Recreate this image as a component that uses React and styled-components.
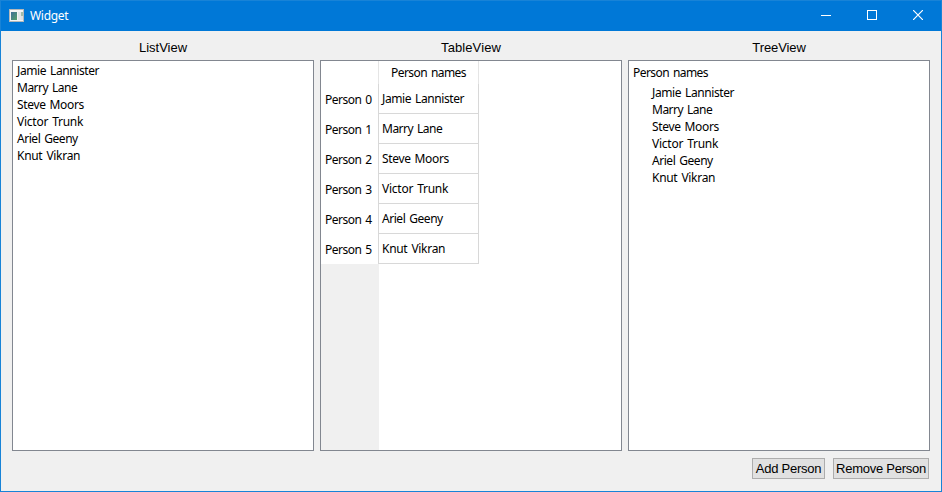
import React from "react";
import styled, { createGlobalStyle } from "styled-components";

const people = [
  { name: "Jamie Lannister", spacing: -0.4 },
  { name: "Marry Lane", spacing: -0.5 },
  { name: "Steve Moors", spacing: -0.35 },
  { name: "Victor Trunk", spacing: -0.25 },
  { name: "Ariel Geeny", spacing: -0.45 },
  { name: "Knut Vikran", spacing: -0.3 },
];

const GlobalStyle = createGlobalStyle`
  * { box-sizing: border-box; }
  body { margin: 0; overflow: hidden; }
`;

const Window = styled.div`
  width: 942px;
  height: 492px;
  display: flex;
  flex-direction: column;
  background: #f0f0f0;
  border: 1px solid #1883d7;
  color: #000;
  font: 12px/17px "Noto Sans", "Open Sans", sans-serif;
  white-space: nowrap;
`;

const TitleBar = styled.header`
  height: 30px;
  flex: none;
  display: flex;
  align-items: center;
  background: #0078d7;
  color: #fff;
  padding-left: 8px;
`;

const Title = styled.span`
  flex: 1;
  margin: -1px 0 0 5px;
  letter-spacing: ${(p) => p.$spacing}px;
`;

const Caption = styled.span`
  width: 46px;
  height: 30px;
  padding-bottom: 2px;
  display: flex;
  align-items: center;
  justify-content: center;
`;

const Views = styled.main`
  display: flex;
  gap: 6px;
  padding: 6px 11px 0;
`;

const Column = styled.section`
  width: 302px;
`;

const Heading = styled.h2`
  margin: 0;
  height: 23px;
  font: 13px/22px "Liberation Sans", Arial, sans-serif;
  text-align: center;
  letter-spacing: ${(p) => p.$spacing}px;
`;

const Panel = styled.div`
  height: 391px;
  background: #fff;
  border: 1px solid #828790;
`;

const List = styled.ul`
  margin: 0;
  list-style: none;
  padding: ${(p) => (p.$tree ? "0 0 0 23px" : "1px 0 0 4px")};
`;

const Label = styled.span`
  display: block;
  letter-spacing: ${(p) => p.$spacing}px;
  word-spacing: 1.2px;
`;

const TreeHeader = styled.div`
  height: 23px;
  padding: 3px 0 0 4px;
`;

const Table = styled.div`
  height: 100%;
  display: grid;
  grid-template-columns: 58px 100px;
  grid-template-rows: 23px repeat(6, 30px) 1fr;
`;

const Corner = styled.div`
  border-right: 1px solid #e5e5e5;
`;

const ColumnHead = styled.div`
  border-right: 1px solid #e5e5e5;
  padding: 3px 0 0 12px;
`;

const RowHead = styled.div`
  border-right: 1px solid #d8d8d8;
  padding: 7px 0 0 4px;
`;

const Cell = styled.div`
  border-right: 1px solid #d8d8d8;
  border-bottom: 1px solid #d8d8d8;
  padding: 6px 0 0 3px;
`;

const HeaderFill = styled.div`
  background: #f0f0f0;
`;

const Actions = styled.footer`
  display: flex;
  justify-content: flex-end;
  gap: 8px;
  padding: 7px 12px 0 0;
`;

const Button = styled.button`
  width: ${(p) => p.$width}px;
  height: 21px;
  padding: 0;
  border: 1px solid #adadad;
  background: #e1e1e1;
  color: #000;
  font: 13px/19px "Liberation Sans", Arial, sans-serif;
  letter-spacing: ${(p) => p.$spacing}px;
`;

function AppIcon() {
  return (
    <svg width="16" height="14" viewBox="0 0 16 14" shapeRendering="crispEdges">
      <defs>
        <linearGradient id="screen" x1="0" y1="0" x2="1" y2="1">
          <stop offset="0" stopColor="#3f6f98" />
          <stop offset="1" stopColor="#55a06a" />
        </linearGradient>
      </defs>
      <rect x="0.5" y="0.5" width="14" height="12" fill="#f4f4f4" stroke="#b4b8ba" />
      <rect x="2" y="3" width="6" height="8" fill="url(#screen)" />
      <rect x="9" y="3" width="3" height="8" fill="#e1e6e8" />
      <rect x="12" y="3" width="2" height="4" fill="#a3bda9" />
      <rect x="12" y="7" width="2" height="4" fill="#dde1e2" />
    </svg>
  );
}

function People({ tree }) {
  return (
    <List $tree={tree}>
      {people.map((p) => (
        <li key={p.name}><Label $spacing={p.spacing}>{p.name}</Label></li>
      ))}
    </List>
  );
}

export default function App() {
  return (
    <>
      <GlobalStyle />
      <Window>
        <TitleBar>
          <AppIcon />
          <Title $spacing={-0.3}>Widget</Title>
          <Caption>
            <svg width="10" height="10"><path d="M0 5.5H10" stroke="#fff" /></svg>
          </Caption>
          <Caption>
            <svg width="10" height="10"><rect x=".5" y=".5" width="9" height="9" fill="none" stroke="#fff" /></svg>
          </Caption>
          <Caption>
            <svg width="10" height="10"><path d="M0 0L10 10M10 0L0 10" stroke="#fff" strokeWidth="1.2" /></svg>
          </Caption>
        </TitleBar>
        <Views>
          <Column>
            <Heading $spacing={0}>ListView</Heading>
            <Panel><People /></Panel>
          </Column>
          <Column>
            <Heading $spacing={0.1}>TableView</Heading>
            <Panel>
              <Table>
                <Corner />
                <ColumnHead><Label $spacing={-0.55}>Person names</Label></ColumnHead>
                {people.map((p, i) => (
                  <React.Fragment key={p.name}>
                    <RowHead><Label $spacing={-0.5}>Person {i}</Label></RowHead>
                    <Cell><Label $spacing={p.spacing}>{p.name}</Label></Cell>
                  </React.Fragment>
                ))}
                <HeaderFill />
              </Table>
            </Panel>
          </Column>
          <Column>
            <Heading $spacing={-0.1}>TreeView</Heading>
            <Panel>
              <TreeHeader><Label $spacing={-0.55}>Person names</Label></TreeHeader>
              <People tree />
            </Panel>
          </Column>
        </Views>
        <Actions>
          <Button $width={73} $spacing={-0.25}>Add Person</Button>
          <Button $width={96} $spacing={-0.25}>Remove Person</Button>
        </Actions>
      </Window>
    </>
  );
}
